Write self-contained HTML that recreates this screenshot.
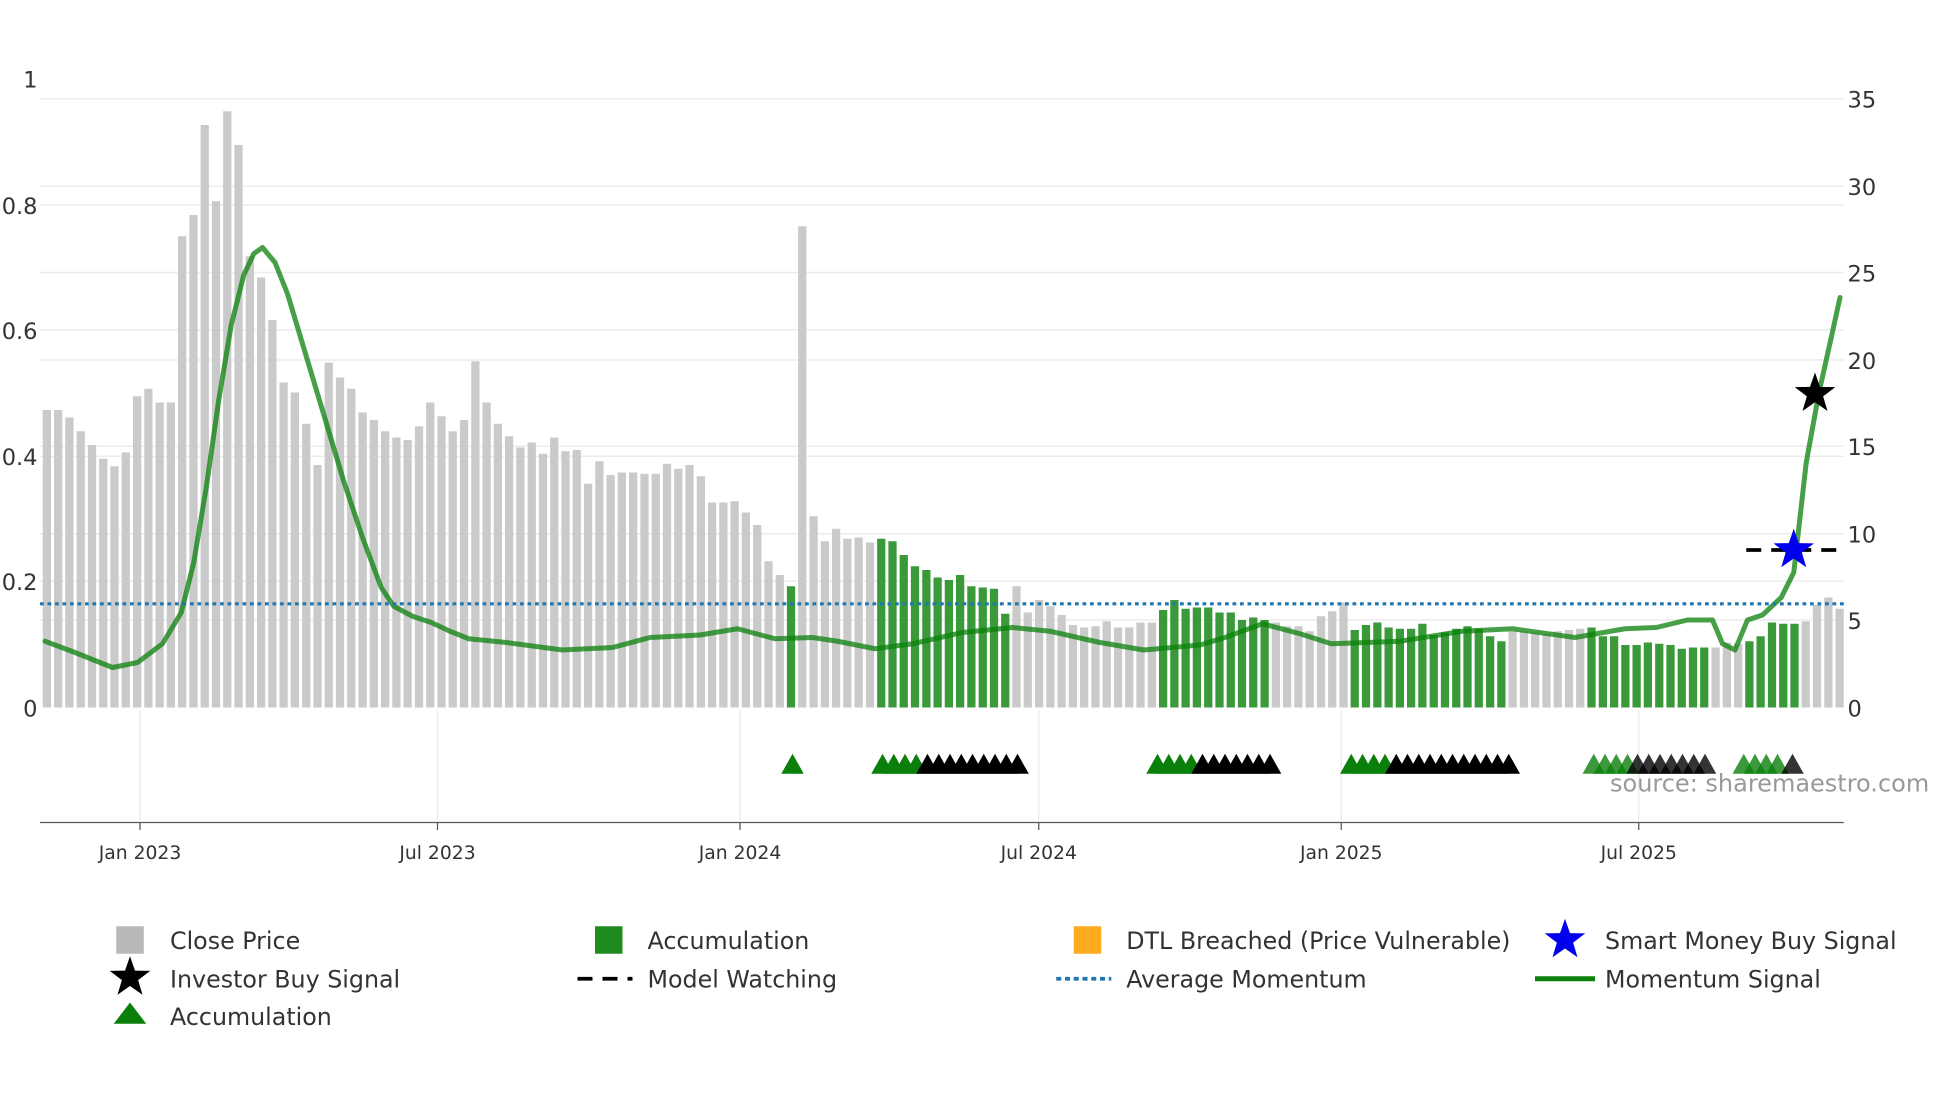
<!DOCTYPE html>
<html><head><meta charset="utf-8">
<style>
html,body{margin:0;padding:0;background:#fff;}
svg{display:block;}
text{font-family:"DejaVu Sans","Liberation Sans",sans-serif;}
</style></head>
<body>
<svg id="s" width="1960" height="1102" viewBox="0 0 1568 881.6" xmlns="http://www.w3.org/2000/svg">
<rect width="1568" height="882" fill="#fff"/>
<g id="grid" stroke="#ececec" stroke-width="1.2"></g>
<g id="bars"></g>
<path id="mom" fill="none" stroke="#0a800a" stroke-width="4" stroke-linejoin="round" stroke-linecap="round" opacity="0.75"/>
<line x1="32" y1="483" x2="1475" y2="483" stroke="#1f77b4" stroke-width="2.5" stroke-dasharray="3,3"/>
<line x1="1397" y1="440" x2="1472" y2="440" stroke="#000" stroke-width="3" stroke-dasharray="12,8"/>
<g id="tri"></g>
<g id="stars"></g>
<line x1="32" y1="658" x2="1475" y2="658" stroke="#555" stroke-width="1"/>
<g id="xt" font-size="15" fill="#333" text-anchor="middle"></g>
<g font-size="18" fill="#333" text-anchor="end">
<text x="30" y="70">1</text><text x="30" y="171">0.8</text><text x="30" y="271">0.6</text><text x="30" y="372">0.4</text><text x="30" y="472">0.2</text><text x="30" y="573">0</text>
</g>
<g font-size="18" fill="#333">
<text x="1478" y="86">35</text><text x="1478" y="156">30</text><text x="1478" y="225">25</text><text x="1478" y="295">20</text><text x="1478" y="364">15</text><text x="1478" y="434">10</text><text x="1478" y="503">5</text><text x="1478" y="573">0</text>
</g>
<text x="1288" y="633" font-size="19.2" fill="#999">source: sharemaestro.com</text>
<g font-size="19" fill="#333">
<rect x="93" y="741" width="22" height="22" fill="#b8b8b8"/><text x="136" y="759">Close Price</text>
<rect x="476" y="741" width="22" height="22" fill="#1e8c1e"/><text x="518" y="759">Accumulation</text>
<rect x="859" y="741" width="22" height="22" fill="#ffa91f"/><text x="901" y="759">DTL Breached (Price Vulnerable)</text>
<text x="1284" y="759">Smart Money Buy Signal</text>
<text x="136" y="790">Investor Buy Signal</text>
<line x1="462" y1="783" x2="506" y2="783" stroke="#000" stroke-width="3" stroke-dasharray="12,8"/><text x="518" y="790">Model Watching</text>
<line x1="845" y1="783" x2="889" y2="783" stroke="#1f77b4" stroke-width="3" stroke-dasharray="4,3"/><text x="901" y="790">Average Momentum</text>
<line x1="1228" y1="783" x2="1276" y2="783" stroke="#0a800a" stroke-width="4"/><text x="1284" y="790">Momentum Signal</text>
<polygon points="104,802 117,819 91,819" fill="#0a800a"/><text x="136" y="820">Accumulation</text>
</g>
</svg>
<script>
var NS="http://www.w3.org/2000/svg";
function el(p,t,a){var e=document.createElementNS(NS,t);for(var k in a)e.setAttribute(k,a[k]);document.getElementById(p).appendChild(e);return e;}
[79,149,164,218,264,288,357,365,427,465,496].forEach(function(y){el("grid","line",{x1:32,x2:1475,y1:y,y2:y});});
[112,350,592,831,1073,1311].forEach(function(x){el("grid","line",{x1:x,x2:x,y1:568,y2:656});});
var tops=[328,328,334,345,356,367,373,362,317,311,322,322,189,172,100,161,89,116,205,222,256,306,314,339,372,290,302,311,330,336,345,350,352,341,322,333,345,336,289,322,339,349,358,354,363,350,361,360,387,369,380,378,378,379,379,371,375,372,381,402,402,401,410,420,449,460,469,181,413,433,423,431,430,434,
431,433,444,453,456,462,464,460,469,470,471,491,
469,490,480,485,492,500,502,501,497,502,502,498,498,
488,480,487,486,486,490,490,496,494,496,
498,501,501,505,493,489,482,
504,500,498,502,503,503,499,508,506,503,501,503,509,513,
505,505,506,507,505,504,503,
502,509,509,516,516,514,515,516,519,518,518,
518,514,515,
513,509,498,499,499,
497,484,478,487];
var green=function(i){return i==66||(i>=74&&i<=85)||(i>=99&&i<=108)||(i>=116&&i<=129)||(i>=137&&i<=147)||(i>=151&&i<=155);};
tops.forEach(function(t,i){var x=37.5+i*9.02;el("bars","rect",{x:(x-3.3).toFixed(1),y:t,width:6.6,height:566-t,fill:green(i)?"#3a9a3a":"#cacaca"});});
var pts=[[36,513],[60,522],[90,534],[110,530],[130,515],[145,490],[155,450],[165,390],[175,320],[185,260],[195,220],[203,203],[210,198],[220,210],[230,235],[245,285],[260,335],[275,385],[290,430],[305,470],[315,485],[330,493],[345,498],[360,505],[375,511],[405,514],[450,520],[490,518],[520,510],[560,508],[590,503],[620,511],[650,510],[670,513],[700,519],[730,515],[770,506],[810,502],[840,505],[880,514],[915,520],[960,516],[980,510],[1010,499],[1040,507],[1065,515],[1120,513],[1170,505],[1210,503],[1260,510],[1300,503],[1325,502],[1350,496],[1370,496],[1378,515],[1388,520],[1398,496],[1410,492],[1425,478],[1435,458],[1445,370],[1455,315],[1465,270],[1472,238]];
document.getElementById("mom").setAttribute("d","M"+pts.map(function(p){return p.join(",");}).join(" L"));
function tri(x,c,o){el("tri","polygon",{points:(x)+",603 "+(x+9)+",619 "+(x-9)+",619",fill:c,opacity:o||1});}
tri(634,"#0a800a");
function grp(gs,n,bs,m,o){for(var i=0;i<n;i++)tri(gs+i*9,"#0a800a",o);for(var j=0;j<m;j++)tri(bs+j*9,"#000",o);}
grp(706,4,742,9);grp(926,4,962,7);grp(1081,4,1117,11);grp(1275,4,1310,7,0.8);grp(1395,4,1434,1,0.8);
function star(id,cx,cy,R,c){var p=[];for(var k=0;k<10;k++){var r=k%2?R*0.4:R;var a=-Math.PI/2+k*Math.PI/5;p.push((cx+r*Math.cos(a)).toFixed(1)+","+(cy+r*Math.sin(a)).toFixed(1));}el(id,"polygon",{points:p.join(" "),fill:c});}
star("stars",1435,440,17,"#0000ee");star("stars",1452,315,17,"#000");
star("s",1252,752,17,"#0000ee");star("s",104,782,17,"#000");
[["Jan 2023",112],["Jul 2023",350],["Jan 2024",592],["Jul 2024",831],["Jan 2025",1073],["Jul 2025",1311]].forEach(function(a){el("xt","line",{x1:a[1],x2:a[1],y1:658,y2:664,stroke:"#555"});var t=el("xt","text",{x:a[1],y:687});t.textContent=a[0];});
</script>
</body></html>
